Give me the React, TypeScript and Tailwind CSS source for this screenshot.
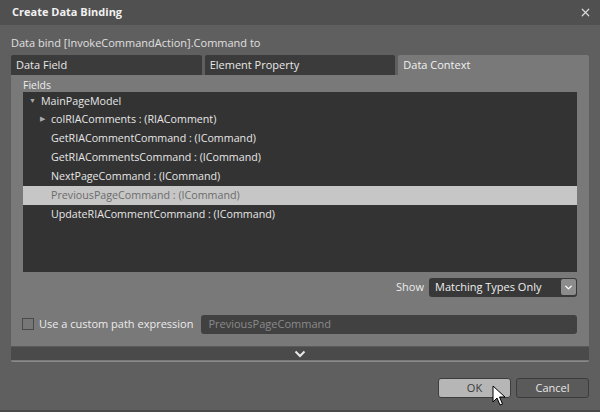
import { ChevronDown, X } from 'lucide-react'

const rows = [
  { label: 'colRIAComments : (RIAComment)', arrow: true },
  { label: 'GetRIACommentCommand : (ICommand)' },
  { label: 'GetRIACommentsCommand : (ICommand)' },
  { label: 'NextPageCommand : (ICommand)' },
  { label: 'PreviousPageCommand : (ICommand)', selected: true },
  { label: 'UpdateRIACommentCommand : (ICommand)' },
]

function Cursor() {
  return (
    <svg className="absolute left-[492px] top-[385px]" width="14" height="22" viewBox="0 0 14 22">
      <path d="M1 1 L1 17 L5 13 L8 20 L10.5 19 L7.5 12 L13 12 Z" fill="#fff" stroke="#000" strokeWidth="1" strokeLinejoin="round" />
    </svg>
  )
}

export default function App() {
  return (
    <div className="relative w-[600px] h-[412px] bg-[#5f5f5f] text-[11px] text-[#e6e6e6] font-['Open_Sans',sans-serif] overflow-hidden">
      <div className="h-[25px] bg-[#505050] flex items-center justify-between pl-[12px] pr-[8px]">
        <span className="font-bold text-[11px] text-[#f2f2f2]">Create Data Binding</span>
        <X size={13} strokeWidth={2.2} className="text-[#d8d8d8]" />
      </div>

      <div className="px-[11px] pt-[10px]">
        <p className="h-[20px] text-[#e0e0e0]">Data bind [InvokeCommandAction].Command to</p>

        <div className="flex gap-[3px] h-[20px]">
          <div className="flex-1 bg-[#3b3b3b] rounded-t-[2px] pl-[5px] leading-[20px] text-[#e8e8e8]">Data Field</div>
          <div className="flex-1 bg-[#3b3b3b] rounded-t-[2px] pl-[5px] leading-[20px] text-[#e8e8e8]">Element Property</div>
          <div className="flex-1 bg-[#797979] rounded-t-[2px] pl-[5px] leading-[20px] text-[#f2f2f2]">Data Context</div>
        </div>

        <div className="bg-[#797979] h-[287px] flex flex-col rounded-b-[2px] border-b border-[#8a8a8a]">
          <div className="px-[12px] pt-[4px] flex-1 flex flex-col">
            <p className="h-[13px] leading-[13px] text-[10.5px] text-[#ececec]">Fields</p>
            <div className="bg-[#333333] h-[180px] text-[10.7px]">
              <div className="h-[18px] flex items-center pl-[6px]">
                <span className="text-[7px] text-[#aaaaaa] w-[12px]">▼</span>
                <span>MainPageModel</span>
              </div>
              {rows.map(r => (
                <div
                  key={r.label}
                  className={`h-[19px] flex items-center pl-[17px] ${r.selected ? 'bg-[#c6c6c6] text-[#6c6c6c]' : ''}`}
                >
                  <span className="text-[7px] text-[#aaaaaa] w-[11px]">{r.arrow ? '▶' : ''}</span>
                  <span>{r.label}</span>
                </div>
              ))}
            </div>

            <div className="flex items-center justify-end gap-[5px] mt-[6px] h-[18px]">
              <span className="text-[#ececec]">Show</span>
              <div className="w-[148px] h-[19px] bg-[#383838] rounded-[3px] flex items-center justify-between pl-[6px] pr-[1px]">
                <span className="text-[#eeeeee]">Matching Types Only</span>
                <div className="w-[15px] h-[16px] bg-[#8c8c8c] rounded-[2px] flex items-center justify-center">
                  <ChevronDown size={11} strokeWidth={3} className="text-white" />
                </div>
              </div>
            </div>

            <div className="flex items-center mt-[18px] h-[20px] -ml-[1px]">
              <div className="w-[12px] h-[12px] border border-[#4a4a4a] bg-[#777777] mr-[5px]" />
              <span className="text-[#ececec]">Use a custom path expression</span>
              <div className="ml-[8px] flex-1 h-[19px] bg-[#414141] rounded-[3px] flex items-center pl-[7px] text-[#8a8a8a]">
                PreviousPageCommand
              </div>
            </div>
          </div>

          <div className="h-[14px] bg-[#4a4a4a] border-t border-[#5a5a5a] flex items-center justify-center mb-[1px]">
            <svg width="12" height="8" viewBox="0 0 12 8">
              <path d="M1.5 1.5 L6 6 L10.5 1.5" fill="none" stroke="#e8e8e8" strokeWidth="2" />
            </svg>
          </div>
        </div>

        <div className="flex justify-end gap-[5px] mt-[16px]">
          <div className="w-[73px] h-[20px] rounded-[3px] bg-[#b6b6b6] border border-[#3c3c3c] flex items-center justify-center text-[#3a3a3a]">OK</div>
          <div className="w-[73px] h-[20px] rounded-[3px] bg-[#5a5a5a] border border-[#3c3c3c] flex items-center justify-center text-[#e8e8e8]">Cancel</div>
        </div>
      </div>
      <div className="absolute left-0 right-0 bottom-0 h-[2px] bg-[#4a4a4a]" />
      <Cursor />
    </div>
  )
}
